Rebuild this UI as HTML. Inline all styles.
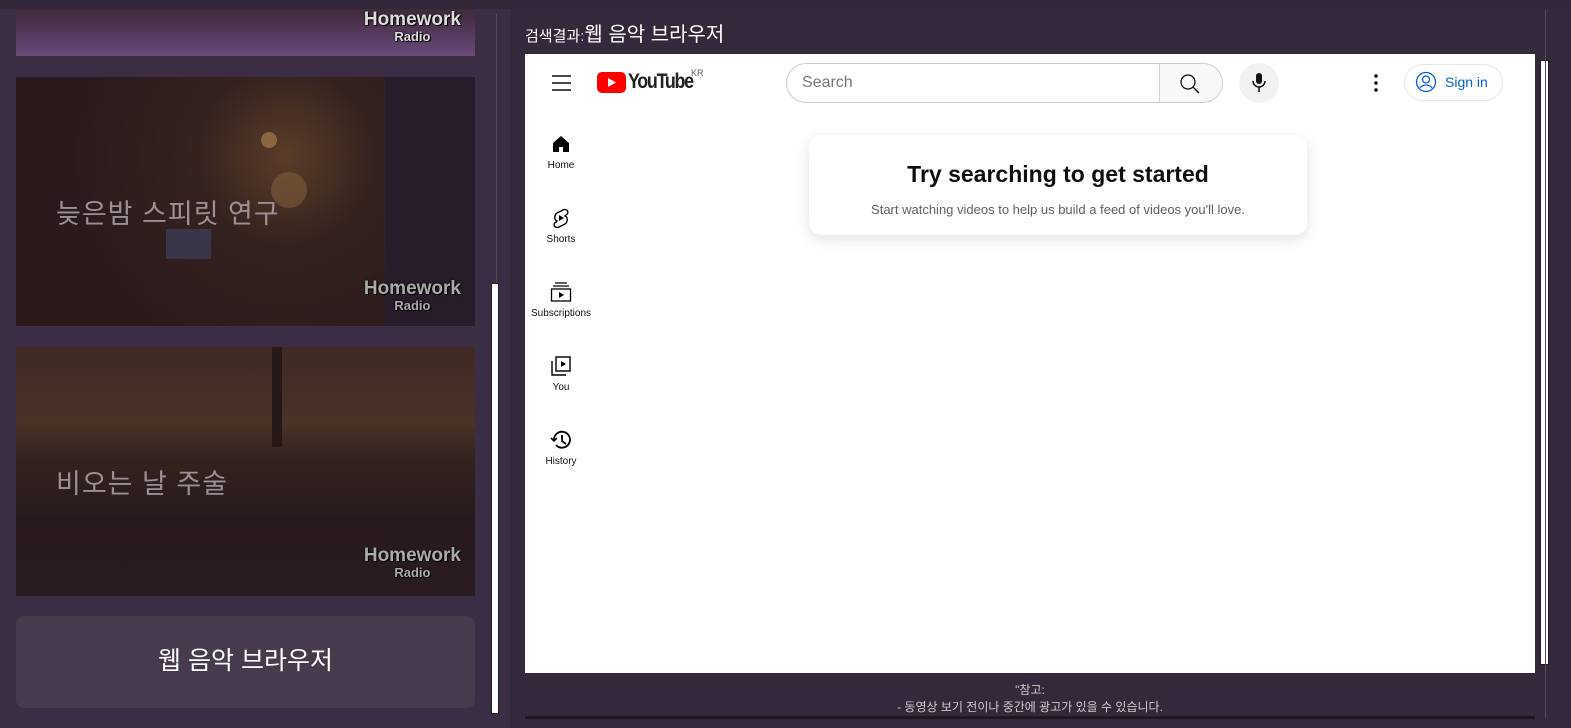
<!DOCTYPE html>
<html><head><meta charset="utf-8"><style>
*{margin:0;padding:0;box-sizing:border-box}
body{width:1571px;height:728px;overflow:hidden;background:#34293b;font-family:"Liberation Sans","Noto Sans CJK KR",sans-serif;position:relative}
.left{position:absolute;left:0;top:0;width:510px;height:728px;background:#3b2e44}
.topbar{position:absolute;left:0;top:0;width:1571px;height:9px;background:#33283a}
.img{position:absolute;left:16px;width:459px;overflow:hidden}
.lbl{position:absolute;left:40px;color:#9a9096;font-size:27px;letter-spacing:1px}
.logo{position:absolute;right:14px;font:bold 19px "Liberation Sans",sans-serif;color:#ddd;text-align:center;line-height:17px;text-shadow:0 0 2px #000,1px 1px 0 #000}
.logo small{display:block;font-size:13px}
.btn{position:absolute;left:16px;top:616px;width:459px;height:92px;background:#473a4d;border-radius:8px;color:#fff;font-size:25px;text-align:center;line-height:90px}
.yt{position:absolute;left:525px;top:54px;width:1010px;height:619px;background:#fff;font-family:"Liberation Sans","Noto Sans CJK KR",sans-serif}
.nav{position:absolute;left:0;width:72px;text-align:center;font-size:10px;color:#0f0f0f}
.nav svg{display:block;margin:0 auto 6px}
</style></head><body>
<div class="left"></div>
<div class="topbar"></div>
<div class="img" style="top:9px;height:47px;background:linear-gradient(180deg,#3e2a38,#5c4068 70%,#6a4c78)">
 <div class="logo" style="top:2px">Homework<small>Radio</small></div>
</div>
<div class="img" style="top:77px;height:249px;background:radial-gradient(circle at 270px 80px,#5a3c28 0,#34221e 90px,#2a1a1c 220px),#2a1a1c">
 <div style="position:absolute;left:245px;top:55px;width:16px;height:16px;border-radius:50%;background:#b08850;opacity:.6"></div>
 <div style="position:absolute;left:255px;top:95px;width:36px;height:36px;border-radius:50%;background:#8a6540;opacity:.5"></div>
 <div style="position:absolute;left:150px;top:152px;width:45px;height:30px;background:#3e4868;opacity:.6"></div>
 <div style="position:absolute;right:0;top:0;width:90px;height:249px;background:#281b2a"></div>
 <div class="lbl" style="top:115px">늦은밤 스피릿 연구</div>
 <div class="logo" style="top:203px;color:#aaa">Homework<small>Radio</small></div>
</div>
<div class="img" style="top:347px;height:249px;background:linear-gradient(180deg,#3f2a24 0,#4a3226 30%,#33231f 45%,#271a1c 70%,#2a1c1f)">
 <div style="position:absolute;left:256px;top:0;width:10px;height:100px;background:#261816"></div>
 <div class="lbl" style="top:115px">비오는 날 주술</div>
 <div class="logo" style="top:200px;color:#aaa">Homework<small>Radio</small></div>
</div>
<div class="btn">웹 음악 브라우저</div>
<div style="position:absolute;left:496px;top:14px;width:1px;height:700px;background:#55485c"></div>
<div style="position:absolute;left:491px;top:283px;width:8px;height:431px;background:#fff;border:1px solid #222"></div>
<div style="position:absolute;left:525px;top:18px;color:#fff;font-size:15px">검색결과:<span style="font-size:20px">웹 음악 브라우저</span></div>
<div class="yt">
 <svg style="position:absolute;left:27px;top:21px" width="20" height="16"><path d="M0 1h19M0 8h19M0 15h19" stroke="#0f0f0f" stroke-width="1.5"/></svg>
 <svg style="position:absolute;left:72px;top:18px" width="29" height="21"><rect width="29" height="21" rx="5" fill="#f00"/><path d="M11 6l8 4.5-8 4.5z" fill="#fff"/></svg>
 <div style="position:absolute;left:103px;top:16px;font-size:21px;font-weight:bold;letter-spacing:-1.5px;color:#212121;transform:scaleX(.85);transform-origin:left">YouTube</div>
 <div style="position:absolute;left:166px;top:14px;font-size:9px;color:#606060">KR</div>
 <div style="position:absolute;left:261px;top:9px;width:437px;height:40px;border:1px solid #ccc;border-radius:20px;overflow:hidden">
  <div style="position:absolute;left:15px;top:10px;font-size:16px;color:#777">Search</div>
  <div style="position:absolute;right:0;top:0;width:63px;height:40px;background:#f8f8f8;border-left:1px solid #d3d3d3"></div>
  <svg style="position:absolute;right:21px;top:9px" width="22" height="22"><circle cx="9" cy="9" r="7" fill="none" stroke="#0f0f0f" stroke-width="1.3"/><path d="M14 14l6 6" stroke="#0f0f0f" stroke-width="1.3"/></svg>
 </div>
 <div style="position:absolute;left:714px;top:9px;width:40px;height:40px;border-radius:50%;background:#f2f2f2"></div>
 <svg style="position:absolute;left:724px;top:18px" width="20" height="22"><rect x="7" y="1" width="6" height="11" rx="3" fill="#0f0f0f"/><path d="M4 9a6 6 0 0 0 12 0M10 15v5" stroke="#0f0f0f" stroke-width="1.5" fill="none"/></svg>
 <svg style="position:absolute;left:849px;top:20px" width="4" height="18"><circle cx="2" cy="2" r="1.7"/><circle cx="2" cy="9" r="1.7"/><circle cx="2" cy="16" r="1.7"/></svg>
 <div style="position:absolute;left:879px;top:10px;width:99px;height:37px;border:1px solid #e5e5e5;border-radius:19px;color:#065fd4;font-size:14px;line-height:35px;padding-left:40px">Sign in</div>
 <svg style="position:absolute;left:890px;top:17px" width="22" height="22"><circle cx="11" cy="11" r="9.5" fill="none" stroke="#065fd4" stroke-width="1.3"/><circle cx="11" cy="8.5" r="3.5" fill="none" stroke="#065fd4" stroke-width="1.3"/><path d="M5 17c3-4 9-4 12 0" stroke="#065fd4" stroke-width="1.3" fill="none"/></svg>
 <div class="nav" style="top:80px"><svg width="20" height="20"><path d="M2 9L10 2l8 7v9h-6v-5H8v5H2z"/></svg>Home</div>
 <div class="nav" style="top:154px"><svg width="20" height="20"><path d="M12 2c4-2 7 3 3 5l-1 1c3 1 3 6 0 8l-6 3c-4 2-7-3-3-5l1-1c-3-1-3-6 0-8z" fill="none" stroke="#000" stroke-width="1.4"/><path d="M8 7v6l5-3z"/></svg>Shorts</div>
 <div class="nav" style="top:228px"><svg width="22" height="20"><path d="M5 1h12M3 4h16" stroke="#000" stroke-width="1.3"/><rect x="1.5" y="7" width="19" height="12" fill="none" stroke="#000" stroke-width="1.3"/><path d="M9 10v6l5-3z"/></svg>Subscriptions</div>
 <div class="nav" style="top:302px"><svg width="20" height="20"><rect x="5" y="1" width="14" height="14" fill="none" stroke="#000" stroke-width="1.4"/><path d="M1 5v14h14" fill="none" stroke="#000" stroke-width="1.4"/><path d="M10 5v6l5-3z"/></svg>You</div>
 <div class="nav" style="top:376px"><svg width="22" height="20"><path d="M4 10a8 8 0 1 1 2 5" fill="none" stroke="#000" stroke-width="1.8"/><path d="M1 8l3 3 3-3" fill="none" stroke="#000" stroke-width="1.6"/><path d="M12 5v6l4 3" fill="none" stroke="#000" stroke-width="1.8"/></svg>History</div>
 <div style="position:absolute;left:284px;top:81px;width:498px;height:100px;border-radius:12px;box-shadow:0 4px 14px rgba(0,0,0,.12);text-align:center">
  <div style="margin-top:26px;font-size:23px;font-weight:bold;color:#0f0f0f">Try searching to get started</div>
  <div style="margin-top:14px;font-size:13px;color:#606060">Start watching videos to help us build a feed of videos you'll love.</div>
 </div>
</div>
<div style="position:absolute;left:1540px;top:60px;width:9px;height:605px;background:#fff;border:1px solid #222"></div>
<div style="position:absolute;left:1545px;top:10px;width:1px;height:708px;background:#55485c"></div>
<div style="position:absolute;left:525px;top:682px;width:1010px;text-align:center;color:#ccc;font-size:12px;line-height:17px">"참고:<br>- 동영상 보기 전이나 중간에 광고가 있을 수 있습니다.</div>
<div style="position:absolute;left:525px;top:716px;width:1010px;height:3px;background:#1e1620"></div>
</body></html>
